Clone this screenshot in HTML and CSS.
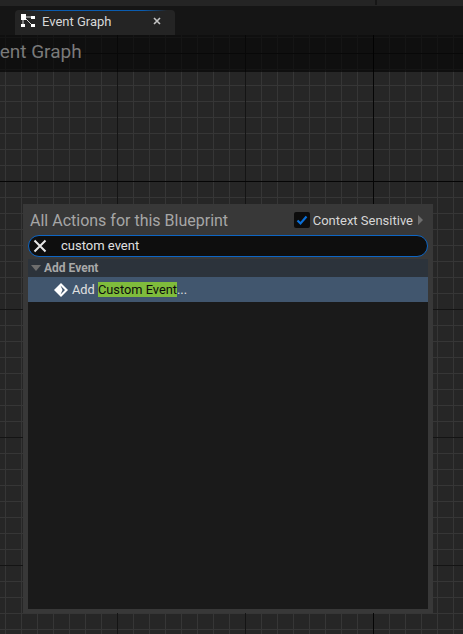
FILE: index.html
```html
<!DOCTYPE html>
<html>
<head lang="en">
    <meta charset="UTF-8">
    <title>Event Graph</title>
    <link rel="stylesheet" href="styles.css">
</head>
<body>
    <div class="topbar"><span class="topbar-notch"></span></div>
    <div class="tabbar">
        <div class="tab">
            <svg class="tab-icon" width="16" height="16" viewBox="0 0 16 16">
                <path d="M3 6v7M5 4h8M4 4l9 9" stroke="#d8d8d8" stroke-width="1" fill="none"/>
                <rect x="1" y="1" width="5" height="6" fill="#fff"/>
                <rect x="1" y="11" width="4" height="3" fill="#fff"/>
                <rect x="11" y="3" width="4" height="3" fill="#fff"/>
                <rect x="11" y="11" width="4" height="3" fill="#fff"/>
            </svg>
            <span class="tab-label">Event Graph</span>
            <svg class="tab-close" width="8" height="8" viewBox="0 0 8 8"><path d="M1 1L7 7M7 1L1 7" stroke="#c4c4c4" stroke-width="1.6" fill="none"/></svg>
        </div>
    </div>
    <div class="graph">
        <div class="breadcrumb"><span class="breadcrumb-text">Event Graph</span></div>
        <div class="menu">
            <div class="menu-head">
                <span class="menu-title">All Actions for this Blueprint</span>
                <span class="check">
                    <svg width="12" height="12" viewBox="0 0 12 12"><path d="M1.5 6.5L4.5 9.5L10.5 2.5" stroke="#0a6fd8" stroke-width="2.2" fill="none"/></svg>
                </span>
                <span class="check-label">Context Sensitive</span>
                <span class="arrow-right"></span>
            </div>
            <div class="search">
                <svg class="search-clear" width="14" height="14" viewBox="0 0 14 14"><path d="M1.5 1.5L12.5 12.5M12.5 1.5L1.5 12.5" stroke="#e6e6e6" stroke-width="2" fill="none"/></svg>
                <span class="search-text">custom event</span>
            </div>
            <div class="list">
                <div class="group"><span class="arrow-down"></span>Add Event</div>
                <div class="item">
                    <svg class="item-icon" width="16" height="16" viewBox="0 0 16 16">
                        <path d="M8 1L15 8L8 15L1 8Z" fill="#fff"/>
                        <path d="M7.5 3.5L12 8L7.5 12.5L9.5 8Z" fill="#41566e"/>
                    </svg>
                    <span>Add <mark class="hit">Custom Event</mark>...</span>
                </div>
            </div>
        </div>
    </div>
</body>
</html>
```

FILE: styles.css
```css
*{
    padding: 0;
    margin: 0;
    box-sizing: border-box;
}
html, body{
    height: 100%;
    overflow: hidden;
}
body{
    display: flex;
    flex-direction: column;
    background: #151515;
    font-family: Roboto, "Liberation Sans", sans-serif;
}
.topbar{
    height: 6px;
    padding-left: 375px;
    background: #242424;
}
.topbar-notch{
    display: block;
    width: 2px;
    height: 5px;
    background: #161616;
}
.tabbar{
    height: 29px;
    padding: 4px 0 0 15px;
    background: #151515;
}
.tab{
    width: 160px;
    height: 25px;
    display: flex;
    align-items: center;
    padding: 0 0 3px 5px;
    background:
        linear-gradient(90deg, transparent 5%, #0a5cb0 20%, #0a5cb0 80%, transparent 95%) top / 100% 1px no-repeat,
        #242424;
    border-radius: 4px 4px 0 0;
    color: #d8d8d8;
    font-size: 13px;
}
.tab-label{
    margin-left: 6px;
    flex: 1;
}
.tab-close{
    margin-right: 14px;
}
.graph{
    flex: 1;
    padding: 169px 30px 21px 23px;
    display: flex;
    flex-direction: column;
    position: relative;
    background-color: #262626;
    background-image:
        linear-gradient(90deg, #050505 1px, transparent 1px),
        linear-gradient(#050505 1px, transparent 1px),
        linear-gradient(90deg, #141414 1px, transparent 1px),
        linear-gradient(#141414 1px, transparent 1px),
        linear-gradient(90deg, #363636 1px, transparent 1px),
        linear-gradient(#363636 1px, transparent 1px);
    background-size: 100% 100%, 100% 100%, 128px 128px, 128px 128px, 16px 16px, 16px 16px;
    background-repeat: no-repeat, no-repeat, repeat, repeat, repeat, repeat;
    background-position: 373px 0, 0 146px, -11px 18px, 0 18px, 5px 2px, 0 2px;
}
.breadcrumb{
    position: absolute;
    top: 0;
    left: 0;
    right: 0;
    height: 37px;
    padding-top: 6px;
    overflow: hidden;
    background: rgba(0,0,0,.6);
}
.breadcrumb-text{
    display: block;
    margin-left: -20px;
    font-size: 19px;
    line-height: 22px;
    color: #7a7a7a;
}
.menu{
    flex: 1;
    display: flex;
    flex-direction: column;
    background: #383838;
    padding: 5px 5px 4px;
}
.menu-head{
    height: 22px;
    display: flex;
    align-items: center;
    padding-left: 2px;
}
.menu-title{
    flex: 1;
    font-size: 16px;
    color: #a6a6a6;
}
.check{
    width: 16px;
    height: 16px;
    display: flex;
    align-items: center;
    justify-content: center;
    background: #0c0c0c;
    border-radius: 2px;
}
.check-label{
    margin-left: 3px;
    font-size: 13px;
    color: #d6d6d6;
}
.arrow-right{
    width: 0;
    height: 0;
    margin: 0 5px;
    border-left: 5px solid #6e6e6e;
    border-top: 5px solid transparent;
    border-bottom: 5px solid transparent;
}
.search{
    height: 22px;
    margin-top: 4px;
    display: flex;
    align-items: center;
    padding-left: 4px;
    background: #0e0e0e;
    border: 1px solid #0e66c4;
    border-radius: 11px;
    font-size: 13px;
    color: #e0e0e0;
}
.search-text{
    margin-left: 14px;
    padding-bottom: 1px;
}
.list{
    flex: 1;
    margin-top: 2px;
    background: #1a1a1a;
}
.group{
    height: 18px;
    display: flex;
    align-items: center;
    padding-left: 3px;
    background: #2c333b;
    font-size: 12px;
    font-weight: bold;
    color: #a8a8a8;
}
.arrow-down{
    width: 0;
    height: 0;
    margin-right: 3px;
    border-top: 6px solid #6e6e6e;
    border-left: 5px solid transparent;
    border-right: 5px solid transparent;
}
.item{
    height: 25px;
    display: flex;
    align-items: center;
    padding-left: 25px;
    background: #41566e;
    font-size: 12.8px;
    color: #e0e0e0;
}
.item-icon{
    margin-right: 3px;
}
.hit{
    background: #7fbc3c;
    color: #0c0c0c;
}
```
